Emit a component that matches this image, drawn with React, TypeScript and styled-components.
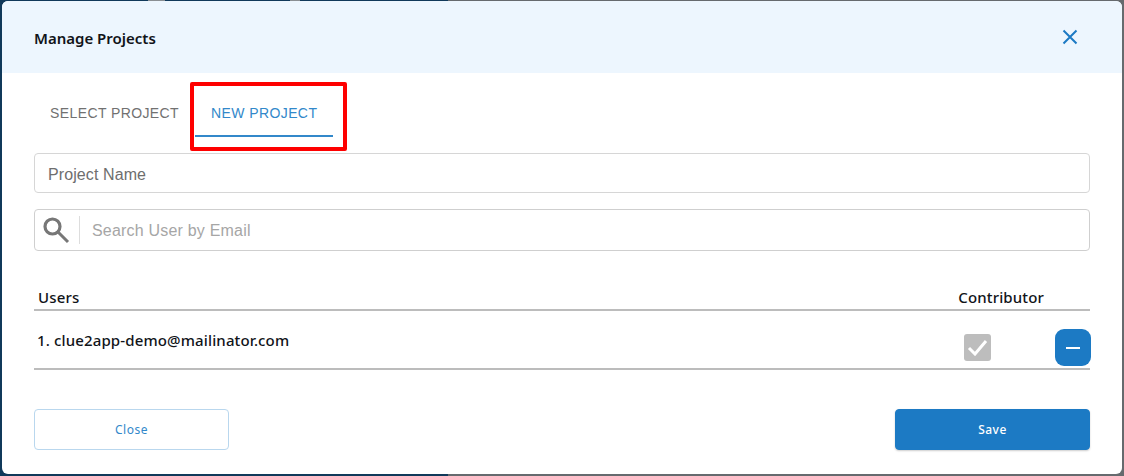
import styled, { createGlobalStyle } from "styled-components";

const palette = {
  navy: "#10395a",
  dim: "#666a6e",
  headerBg: "#edf6fe",
  blue: "#1c7ac4",
  tabBlue: "#3288ca",
  rule: "#bcbcbc",
  text: "#111419",
};

const sans = `"Noto Sans", "Open Sans", sans-serif`;
const arial = `"Liberation Sans", Arial, sans-serif`;

const Global = createGlobalStyle`
  html, body {
    margin: 0;
    padding: 0;
    height: 100%;
    overflow: hidden;
  }
  * {
    box-sizing: border-box;
  }
`;

const Backdrop = styled.main`
  width: 1124px;
  height: 476px;
  padding: 1px 2px 2px;
  background:
    linear-gradient(90deg, transparent 148px, #8a8f93 148px, #8a8f93 165px, transparent 165px, transparent 290px, #8a8f93 290px, #8a8f93 300px, transparent 300px) top / 100% 1px no-repeat,
    linear-gradient(90deg, ${palette.navy} 448px, ${palette.dim} 448px);
`;

const Modal = styled.section`
  position: relative;
  height: 100%;
  display: flex;
  flex-direction: column;
  background: #fff;
  border-radius: 6px;
  overflow: hidden;
`;

const Header = styled.header`
  height: 72px;
  flex: none;
  display: flex;
  align-items: center;
  justify-content: space-between;
  padding: 0 44px 0 32px;
  background: ${palette.headerBg};
`;

const Title = styled.h2`
  margin: 1px 0 0;
  font-family: ${sans};
  font-size: 15px;
  font-weight: 600;
  color: ${palette.text};
`;

const CloseIcon = styled.button`
  display: flex;
  padding: 0;
  border: none;
  background: none;
  color: ${palette.blue};
  cursor: pointer;
`;

const Body = styled.div`
  flex: 1;
  display: flex;
  flex-direction: column;
  padding: 17px 32px 0;
`;

const Tabs = styled.nav`
  display: flex;
`;

const Tab = styled.button<{ $active?: boolean }>`
  height: 47px;
  padding: 0 16px;
  border: none;
  border-bottom: 2px solid ${(p) => (p.$active ? palette.tabBlue : "transparent")};
  background: none;
  font-family: ${arial};
  font-size: 14px;
  letter-spacing: 0.4px;
  color: ${(p) => (p.$active ? palette.tabBlue : "#717171")};
  cursor: pointer;
`;

const TextInput = styled.input`
  height: 40px;
  margin-top: 16px;
  padding: 3px 13px 0;
  border: 1px solid #d6d6d6;
  border-radius: 4px;
  font-family: ${arial};
  font-size: 16px;
  letter-spacing: 0.1px;
  outline: none;

  &::placeholder {
    color: #6e6e6e;
    opacity: 1;
  }
`;

const SearchBox = styled.label`
  height: 42px;
  margin-top: 16px;
  display: flex;
  align-items: center;
  border: 1px solid #cfcfcf;
  border-radius: 4px;
`;

const SearchGlyph = styled.svg`
  flex: none;
  margin-left: 8px;
  color: #777;
`;

const SearchDivider = styled.span`
  width: 1px;
  height: 28px;
  margin: 0 12px 0 9px;
  background: #ddd;
`;

const SearchInput = styled.input`
  flex: 1;
  min-width: 0;
  border: none;
  padding: 1px 0 0;
  font-family: ${arial};
  font-size: 16px;
  letter-spacing: 0.2px;
  outline: none;

  &::placeholder {
    color: #a6a6a6;
    opacity: 1;
  }
`;

const UsersHead = styled.div`
  height: 60px;
  display: flex;
  align-items: flex-end;
  justify-content: space-between;
  padding: 0 46px 2px 4px;
  border-bottom: 2px solid ${palette.rule};
  font-family: ${sans};
  font-size: 15px;
  font-weight: 500;
  letter-spacing: 0.14px;
  color: ${palette.text};
`;

const UserRow = styled.div`
  height: 59px;
  display: flex;
  align-items: flex-start;
  padding: 19px 0 0 3px;
  border-bottom: 2px solid ${palette.rule};
`;

const UserName = styled.span`
  flex: 1;
  font-family: ${sans};
  font-size: 15px;
  font-weight: 500;
  letter-spacing: 0.14px;
  line-height: 20px;
  color: ${palette.text};
`;

const Check = styled.span`
  width: 27px;
  height: 27px;
  margin-top: 4px;
  display: flex;
  align-items: center;
  justify-content: center;
  background: #bdbdbd;
  border-radius: 3px;
`;

const RemoveButton = styled.button`
  width: 36px;
  height: 37px;
  margin: -1px -1px 0 64px;
  display: flex;
  align-items: center;
  justify-content: center;
  padding: 0;
  border: none;
  border-radius: 9px;
  background: ${palette.blue};
  cursor: pointer;
`;

const Footer = styled.footer`
  margin-top: 39px;
  display: flex;
  justify-content: space-between;
`;

const FooterButton = styled.button<{ $primary?: boolean }>`
  width: 195px;
  height: 41px;
  border: 1px solid ${(p) => (p.$primary ? palette.blue : "#b9d7ee")};
  border-radius: 4px;
  background: ${(p) => (p.$primary ? palette.blue : "#fff")};
  color: ${(p) => (p.$primary ? "#fff" : palette.tabBlue)};
  font-family: ${sans};
  font-size: 12px;
  font-weight: ${(p) => (p.$primary ? 500 : 400)};
  letter-spacing: 0.5px;
  box-shadow: ${(p) => (p.$primary ? "0 1px 2px rgba(0, 0, 0, 0.2)" : "none")};
  cursor: pointer;
`;

// annotation drawn on top of the screenshot, not part of the dialog
const Highlight = styled.div`
  position: absolute;
  left: 188px;
  top: 81px;
  width: 157px;
  height: 69px;
  border: 4px solid #fe0000;
  border-radius: 2px;
  pointer-events: none;
`;

export default function App() {
  return (
    <Backdrop>
      <Global />
      <Modal>
        <Header>
          <Title>Manage Projects</Title>
          <CloseIcon aria-label="Close">
            <svg width="16" height="16" viewBox="0 0 16 16" fill="none" stroke="currentColor" strokeWidth="2">
              <path d="M1.5 1.5l13 13M14.5 1.5l-13 13" />
            </svg>
          </CloseIcon>
        </Header>
        <Body>
          <Tabs>
            <Tab>SELECT PROJECT</Tab>
            <Tab $active>NEW PROJECT</Tab>
          </Tabs>
          <TextInput placeholder="Project Name" />
          <SearchBox>
            <SearchGlyph width="27" height="27" viewBox="0 0 27 27" fill="none" stroke="currentColor">
              <circle cx="9.5" cy="9.5" r="7.5" strokeWidth="3.2" />
              <path d="M15 15l10 10" strokeWidth="3" />
            </SearchGlyph>
            <SearchDivider />
            <SearchInput placeholder="Search User by Email" />
          </SearchBox>
          <UsersHead>
            <span>Users</span>
            <span>Contributor</span>
          </UsersHead>
          <UserRow>
            <UserName>1. clue2app-demo@mailinator.com</UserName>
            <Check>
              <svg width="21" height="17" viewBox="0 0 21 17" fill="none" stroke="#fff" strokeWidth="3">
                <path d="M2 9l6 6L19 2" />
              </svg>
            </Check>
            <RemoveButton aria-label="Remove user">
              <svg width="14" height="2" viewBox="0 0 14 2">
                <rect width="14" height="2" fill="#fff" />
              </svg>
            </RemoveButton>
          </UserRow>
          <Footer>
            <FooterButton>Close</FooterButton>
            <FooterButton $primary>Save</FooterButton>
          </Footer>
        </Body>
        <Highlight />
      </Modal>
    </Backdrop>
  );
}
